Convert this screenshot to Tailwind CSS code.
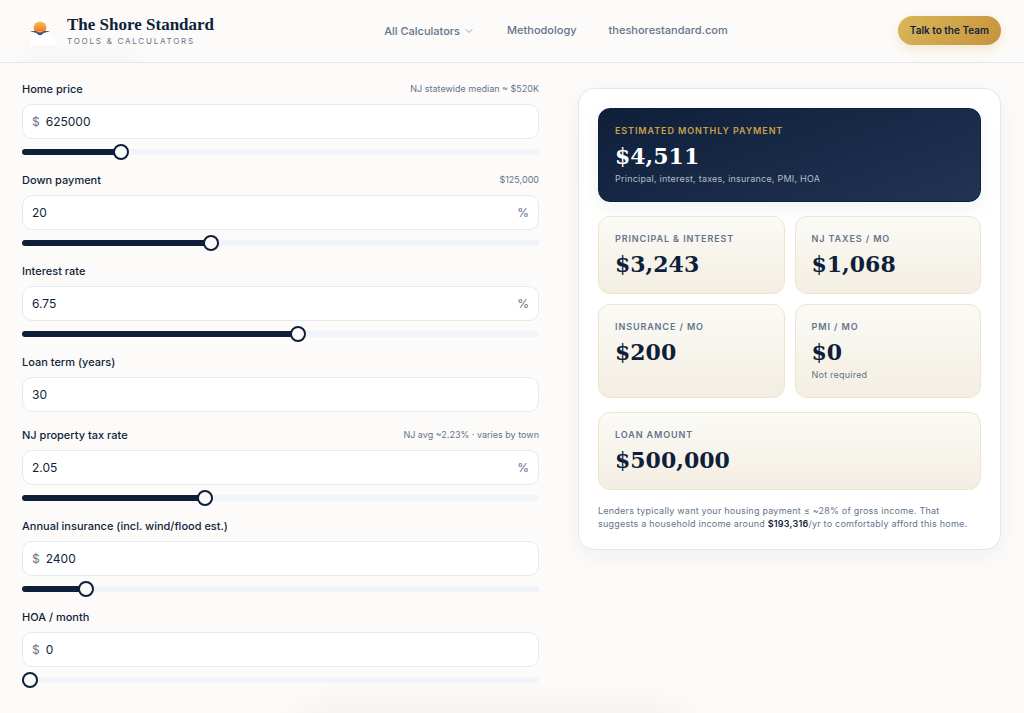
<!DOCTYPE html>
<html lang="en">
<head>
    <meta charset="UTF-8">
    <meta name="viewport" content="width=device-width, initial-scale=1.0">
    <title>NJ Mortgage Calculator - The Shore Standard</title>
    <script src="https://cdn.jsdelivr.net/npm/@tailwindcss/browser@4"></script>
</head>
<body class="bg-[#fcfbf9] font-[Inter,sans-serif] text-[#0f1f3a] min-h-screen overflow-x-hidden">
    <!-- Header -->
    <header class="relative overflow-hidden border-b border-[#e2e6ee]">
        <div class="absolute left-6 top-14 h-4 w-28 rounded-full bg-slate-900/4 blur-md"></div>
        <div class="relative flex items-center justify-between h-[62px] pl-[22px] pr-[23px] pb-[2px]">
            <a href="#" class="flex items-center gap-[9px]">
                <svg class="size-9" viewBox="0 0 36 36" aria-hidden="true">
                    <defs>
                        <linearGradient id="sun" x1="0" y1="0" x2="0" y2="1">
                            <stop offset="0" stop-color="#f6c544"/>
                            <stop offset="1" stop-color="#f0762b"/>
                        </linearGradient>
                    </defs>
                    <path d="M11 21h16l8 10q1 2-2 2H10q-2 0-2-2z" fill="#fff"/>
                    <path d="M13.200 19.800a6.300 6.300 0 1 1 9.600 0z" fill="url(#sun)"/>
                    <path d="M8 19.200q5-.8 10 1.400q5-2.200 10-1.400q-4 .3-7 2.200q-1.500 1.500-3 1.500t-3-1.500q-3-1.900-7-2.200z" fill="#1d2b50"/>
                    <path d="M13.500 20.500q2.500 0 4.500 1.200q2-1.200 4.500-1.200" fill="none" stroke="#e8e6ea" stroke-width=".4"/>
                </svg>
                <span class="pt-[2px]">
                    <span class="block font-['Liberation_Serif',serif] text-[17px] leading-5 font-bold">The Shore Standard</span>
                    <span class="block text-[8px] leading-3 tracking-[0.22em] text-[#64748b]">TOOLS &amp; CALCULATORS</span>
                </span>
            </a>
            <nav class="flex items-center gap-8 text-[11px] font-medium text-[#64748b]">
                <button type="button" class="flex items-center gap-[3px] pt-[2px]">
                    All Calculators
                    <svg class="size-3" viewBox="0 0 12 12" fill="none" stroke="#94a3b8" stroke-linecap="round" stroke-linejoin="round" aria-hidden="true"><path d="M3 4.500l3 3 3-3"/></svg>
                </button>
                <a href="#">Methodology</a>
                <a href="#">theshorestandard.com</a>
            </nav>
            <a href="#" class="rounded-full bg-linear-135 from-[#d9b75a] to-[#c6923c] px-3 py-[7px] text-[10px] leading-[15px] font-semibold shadow-[0_4px_12px_rgba(212,175,85,0.25)]">Talk to the Team</a>
        </div>
    </header>

    <main class="grid grid-cols-[517fr_423fr] items-start gap-[39px] pl-[22px] pr-[23px] pt-4">
        <!-- Inputs -->
        <form class="flex flex-col gap-[9px]">
            <div>
                <div class="flex items-center justify-between h-5">
                    <label for="price" class="text-[11px] font-medium">Home price</label>
                    <span class="text-[9px] text-[#64748b]">NJ statewide median ~ $520K</span>
                </div>
                <div class="mt-[5px] flex items-center h-[35px] rounded-[10px] border border-[#e5e9f0] bg-white px-[9px] text-[12px]">
                    <span class="mr-[6px] text-[#64748b]">$</span>
                    <input id="price" type="text" inputmode="decimal" value="625000" class="w-full min-w-0 outline-none">
                </div>
                <input type="range" aria-label="Home price" min="100000" max="3000000" step="5000" value="625000" style="--fill: 18.1%"
                    class="mt-[10px] mb-[6px] block h-[6px] w-full appearance-none rounded-full bg-[linear-gradient(to_right,#0f1f3a_var(--fill),#f1f4f8_var(--fill))] [&::-webkit-slider-thumb]:size-4 [&::-webkit-slider-thumb]:appearance-none [&::-webkit-slider-thumb]:rounded-full [&::-webkit-slider-thumb]:border-2 [&::-webkit-slider-thumb]:border-[#0f1f3a] [&::-webkit-slider-thumb]:bg-[#fcfbf9]">
            </div>
            <div>
                <div class="flex items-center justify-between h-5">
                    <label for="down" class="text-[11px] font-medium">Down payment</label>
                    <span class="text-[9px] text-[#64748b]">$125,000</span>
                </div>
                <div class="mt-[5px] flex items-center h-[35px] rounded-[10px] border border-[#e5e9f0] bg-white px-[9px] text-[12px]">
                    <input id="down" type="text" inputmode="decimal" value="20" class="w-full min-w-0 outline-none">
                    <span class="text-[#64748b]">%</span>
                </div>
                <input type="range" aria-label="Down payment" min="3" max="50" step="1" value="20" style="--fill: 36.2%"
                    class="mt-[10px] mb-[6px] block h-[6px] w-full appearance-none rounded-full bg-[linear-gradient(to_right,#0f1f3a_var(--fill),#f1f4f8_var(--fill))] [&::-webkit-slider-thumb]:size-4 [&::-webkit-slider-thumb]:appearance-none [&::-webkit-slider-thumb]:rounded-full [&::-webkit-slider-thumb]:border-2 [&::-webkit-slider-thumb]:border-[#0f1f3a] [&::-webkit-slider-thumb]:bg-[#fcfbf9]">
            </div>
            <div>
                <div class="flex items-center justify-between h-5">
                    <label for="rate" class="text-[11px] font-medium">Interest rate</label>
                </div>
                <div class="mt-[5px] flex items-center h-[35px] rounded-[10px] border border-[#e5e9f0] bg-white px-[9px] text-[12px]">
                    <input id="rate" type="text" inputmode="decimal" value="6.75" class="w-full min-w-0 outline-none">
                    <span class="text-[#64748b]">%</span>
                </div>
                <input type="range" aria-label="Interest rate" min="3" max="10" step="0.125" value="6.75" style="--fill: 53.6%"
                    class="mt-[10px] mb-[6px] block h-[6px] w-full appearance-none rounded-full bg-[linear-gradient(to_right,#0f1f3a_var(--fill),#f1f4f8_var(--fill))] [&::-webkit-slider-thumb]:size-4 [&::-webkit-slider-thumb]:appearance-none [&::-webkit-slider-thumb]:rounded-full [&::-webkit-slider-thumb]:border-2 [&::-webkit-slider-thumb]:border-[#0f1f3a] [&::-webkit-slider-thumb]:bg-[#fcfbf9]">
            </div>
            <div class="pb-1">
                <div class="flex items-center justify-between h-5">
                    <label for="term" class="text-[11px] font-medium">Loan term (years)</label>
                </div>
                <div class="mt-[5px] flex items-center h-[35px] rounded-[10px] border border-[#e5e9f0] bg-white px-[9px] text-[12px]">
                    <input id="term" type="text" inputmode="decimal" value="30" class="w-full min-w-0 outline-none">
                </div>
            </div>
            <div>
                <div class="flex items-center justify-between h-5">
                    <label for="tax" class="text-[11px] font-medium">NJ property tax rate</label>
                    <span class="text-[9px] text-[#64748b]">NJ avg ~2.23% · varies by town</span>
                </div>
                <div class="mt-[5px] flex items-center h-[35px] rounded-[10px] border border-[#e5e9f0] bg-white px-[9px] text-[12px]">
                    <input id="tax" type="text" inputmode="decimal" value="2.05" class="w-full min-w-0 outline-none">
                    <span class="text-[#64748b]">%</span>
                </div>
                <input type="range" aria-label="NJ property tax rate" min="1" max="4" step="0.01" value="2.05" style="--fill: 35%"
                    class="mt-[10px] mb-[6px] block h-[6px] w-full appearance-none rounded-full bg-[linear-gradient(to_right,#0f1f3a_var(--fill),#f1f4f8_var(--fill))] [&::-webkit-slider-thumb]:size-4 [&::-webkit-slider-thumb]:appearance-none [&::-webkit-slider-thumb]:rounded-full [&::-webkit-slider-thumb]:border-2 [&::-webkit-slider-thumb]:border-[#0f1f3a] [&::-webkit-slider-thumb]:bg-[#fcfbf9]">
            </div>
            <div>
                <div class="flex items-center justify-between h-5">
                    <label for="insurance" class="text-[11px] font-medium">Annual insurance (incl. wind/flood est.)</label>
                </div>
                <div class="mt-[5px] flex items-center h-[35px] rounded-[10px] border border-[#e5e9f0] bg-white px-[9px] text-[12px]">
                    <span class="mr-[6px] text-[#64748b]">$</span>
                    <input id="insurance" type="text" inputmode="decimal" value="2400" class="w-full min-w-0 outline-none">
                </div>
                <input type="range" aria-label="Annual insurance" min="800" max="15000" step="100" value="2400" style="--fill: 11.3%"
                    class="mt-[10px] mb-[6px] block h-[6px] w-full appearance-none rounded-full bg-[linear-gradient(to_right,#0f1f3a_var(--fill),#f1f4f8_var(--fill))] [&::-webkit-slider-thumb]:size-4 [&::-webkit-slider-thumb]:appearance-none [&::-webkit-slider-thumb]:rounded-full [&::-webkit-slider-thumb]:border-2 [&::-webkit-slider-thumb]:border-[#0f1f3a] [&::-webkit-slider-thumb]:bg-[#fcfbf9]">
            </div>
            <div>
                <div class="flex items-center justify-between h-5">
                    <label for="hoa" class="text-[11px] font-medium">HOA / month</label>
                </div>
                <div class="mt-[5px] flex items-center h-[35px] rounded-[10px] border border-[#e5e9f0] bg-white px-[9px] text-[12px]">
                    <span class="mr-[6px] text-[#64748b]">$</span>
                    <input id="hoa" type="text" inputmode="decimal" value="0" class="w-full min-w-0 outline-none">
                </div>
                <input type="range" aria-label="HOA per month" min="0" max="2000" step="10" value="0" style="--fill: 0%"
                    class="mt-[10px] mb-[6px] block h-[6px] w-full appearance-none rounded-full bg-[linear-gradient(to_right,#0f1f3a_var(--fill),#f1f4f8_var(--fill))] [&::-webkit-slider-thumb]:size-4 [&::-webkit-slider-thumb]:appearance-none [&::-webkit-slider-thumb]:rounded-full [&::-webkit-slider-thumb]:border-2 [&::-webkit-slider-thumb]:border-[#0f1f3a] [&::-webkit-slider-thumb]:bg-[#fcfbf9]">
            </div>
        </form>

        <!-- Results -->
        <section class="mt-[9px] rounded-2xl border border-[#e2e6ee] bg-white p-[19px] shadow-[0_6px_24px_rgba(15,31,58,0.05)]">
            <div class="rounded-xl border border-[#0f1f3a] bg-linear-160 from-[#0f1f3a] to-[#213453] p-4 shadow-[0_6px_20px_rgba(15,31,58,0.06)]">
                <p class="text-[9px] leading-3 font-semibold tracking-widest text-[#c9a24a]">ESTIMATED MONTHLY PAYMENT</p>
                <p class="mt-[5px] font-['DejaVu_Serif',serif] text-[22px] leading-7 font-bold text-white">$4,511</p>
                <p class="mt-[3px] text-[9px] leading-3 tracking-wide text-[#b4bcc9]">Principal, interest, taxes, insurance, PMI, HOA</p>
            </div>
            <div class="mt-[14px] grid grid-cols-2 gap-[10px]">
                <div class="rounded-xl border border-[#efe5c8] bg-linear-to-b from-[#fbfaf6] to-[#f3eee3] px-4 pt-4 pb-[15px]">
                    <p class="text-[9px] leading-3 font-semibold tracking-widest text-[#64748b]">PRINCIPAL &amp; INTEREST</p>
                    <p class="mt-[5px] font-['DejaVu_Serif',serif] text-[22px] leading-7 font-bold">$3,243</p>
                </div>
                <div class="rounded-xl border border-[#efe5c8] bg-linear-to-b from-[#fbfaf6] to-[#f3eee3] px-4 pt-4 pb-[15px]">
                    <p class="text-[9px] leading-3 font-semibold tracking-widest text-[#64748b]">NJ TAXES / MO</p>
                    <p class="mt-[5px] font-['DejaVu_Serif',serif] text-[22px] leading-7 font-bold">$1,068</p>
                </div>
                <div class="rounded-xl border border-[#efe5c8] bg-linear-to-b from-[#fbfaf6] to-[#f3eee3] p-4">
                    <p class="text-[9px] leading-3 font-semibold tracking-widest text-[#64748b]">INSURANCE / MO</p>
                    <p class="mt-[5px] font-['DejaVu_Serif',serif] text-[22px] leading-7 font-bold">$200</p>
                </div>
                <div class="rounded-xl border border-[#efe5c8] bg-linear-to-b from-[#fbfaf6] to-[#f3eee3] p-4">
                    <p class="text-[9px] leading-3 font-semibold tracking-widest text-[#64748b]">PMI / MO</p>
                    <p class="mt-[5px] font-['DejaVu_Serif',serif] text-[22px] leading-7 font-bold">$0</p>
                    <p class="mt-[3px] text-[9px] leading-3 tracking-wide text-[#64748b]">Not required</p>
                </div>
            </div>
            <div class="mt-[14px] rounded-xl border border-[#efe5c8] bg-linear-to-b from-[#fbfaf6] to-[#f3eee3] px-4 pt-4 pb-[15px]">
                <p class="text-[9px] leading-3 font-semibold tracking-widest text-[#64748b]">LOAN AMOUNT</p>
                <p class="mt-[5px] font-['DejaVu_Serif',serif] text-[22px] leading-7 font-bold">$500,000</p>
            </div>
            <p class="mt-[14px] text-[9px] leading-[13px] tracking-wide text-[#64748b]">Lenders typically want your housing payment ≤ ~28% of gross income. That suggests a household income around <strong class="font-semibold text-[#0f1f3a]">$193,316</strong>/yr to comfortably afford this home.</p>
        </section>
    </main>

    <div class="fixed left-0 right-11 top-full mx-auto w-96 h-10 rounded-xl shadow-[0_0_36px_8px_rgba(15,31,58,0.04)]"></div>
</body>
</html>
